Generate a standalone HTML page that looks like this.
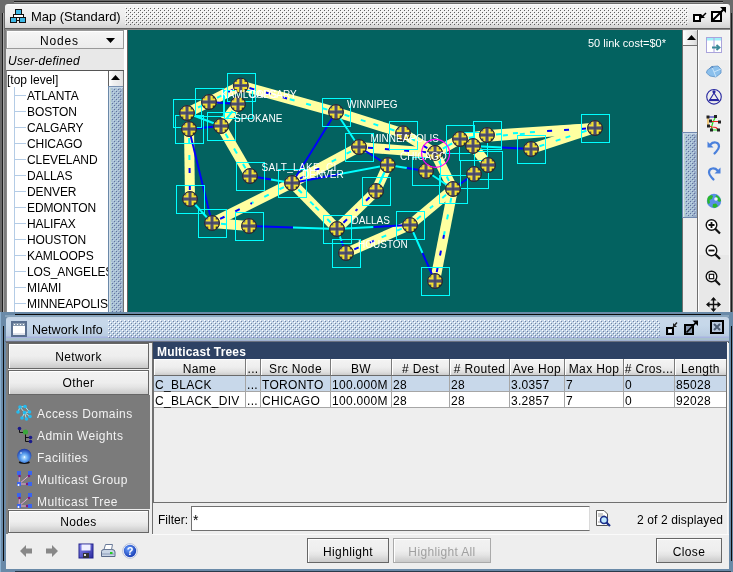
<!DOCTYPE html>
<html><head><meta charset="utf-8">
<style>
*{margin:0;padding:0;box-sizing:border-box}
html,body{width:733px;height:572px;overflow:hidden;background:#6b6b6b;font-family:"Liberation Sans",sans-serif;font-size:12px;color:#000}
.a{position:absolute}
.t{position:absolute;white-space:nowrap;line-height:16px;will-change:transform}
.m{letter-spacing:0.35px}
.btn{will-change:transform;position:absolute;border:1px solid #666;background:linear-gradient(#f2f2f2 0%,#eeeeee 50%,#e4e4e4 70%,#d2d2d2 90%,#cacaca 100%);text-align:center;box-shadow:inset 1px 1px 0 #fff;letter-spacing:0.35px}
.hd{will-change:transform;position:absolute;top:0;height:17px;border-right:1px solid #7a7a7a;border-bottom:1px solid #6a6a6a;background:linear-gradient(#f4f4f4,#eeeeee 50%,#e0e0e0 80%,#cccccc);text-align:center;line-height:20px;box-shadow:inset 1px 1px 0 #fff;letter-spacing:0.35px}
.cell{will-change:transform;position:absolute;height:16px;border-right:1px solid #a6a6a6;border-bottom:1px solid #a6a6a6;line-height:18px;padding-left:1px;white-space:nowrap;letter-spacing:0.3px}
</style></head><body>

<div class="a" style="left:14px;top:1px;width:709px;height:1px;background:#1e1e1e;"></div>
<div class="a" style="left:14px;top:2px;width:709px;height:1px;background:#9a9a9a;"></div>
<div class="a" style="left:2px;top:13px;width:1px;height:300px;background:#1e1e1e;"></div>
<div class="a" style="left:3px;top:13px;width:1px;height:300px;background:#a8a8a8;"></div>
<div class="a" style="left:731px;top:13px;width:1px;height:300px;background:#1e1e1e;"></div>
<div class="a" style="left:5px;top:4px;width:725px;height:25px;background:linear-gradient(#ffffff 0px,#f2f2f2 2px,#eeeeee 12px,#e6e6e6 17px,#dcdcdc 21px,#d4d4d4 24px);border-radius:3px 3px 0 0"></div>
<svg class="a" style="left:125px;top:7px" width="563" height="18" shape-rendering="crispEdges"><defs><pattern id="p1" x="0" y="0" width="4" height="4" patternUnits="userSpaceOnUse"><rect x="0" y="0" width="1" height="1" fill="#ffffff"/><rect x="2" y="2" width="1" height="1" fill="#ffffff"/><rect x="1" y="1" width="1" height="1" fill="#5e5e5e"/><rect x="3" y="3" width="1" height="1" fill="#5e5e5e"/></pattern></defs><rect width="563" height="18" fill="url(#p1)"/></svg>
<div class="a" style="left:5px;top:28px;width:725px;height:1px;background:#606060;"></div>
<div class="a" style="left:5px;top:29px;width:725px;height:1px;background:#8a8a8a;"></div>
<svg class="a" style="left:10px;top:9px" width="17" height="15" shape-rendering="crispEdges">
<rect x="5.5" y="0.5" width="6" height="5" fill="#3cb8e6" stroke="#111"/>
<rect x="3.5" y="5.5" width="10" height="3" fill="#fff" stroke="#111"/>
<rect x="0.5" y="8.5" width="6" height="5" fill="#3cb8e6" stroke="#111"/>
<rect x="9.5" y="8.5" width="6" height="5" fill="#3cb8e6" stroke="#111"/>
<rect x="6" y="11" width="4" height="1" fill="#111"/>
</svg>
<div class="t" style="left:31px;top:8px;font-size:13px;letter-spacing:-0.05px;line-height:17px">Map (Standard)</div>
<svg class="a" style="left:692px;top:6px" width="36" height="18" viewBox="0 0 36 18" shape-rendering="crispEdges">
<rect x="2" y="9" width="6" height="6" fill="#fff" stroke="#000" stroke-width="2"/>
<path d="M9 12L14 7" stroke="#000" stroke-width="1.4" fill="none" shape-rendering="auto"/>
<path d="M9 8V12H13Z" fill="#000" shape-rendering="auto"/>
<rect x="20" y="6" width="9" height="9" fill="#fff" stroke="#000" stroke-width="2"/>
<path d="M21 14L33 2" stroke="#000" stroke-width="2" fill="none" shape-rendering="auto"/>
<path d="M28 1H34V7Z" fill="#000" shape-rendering="auto"/>
</svg>
<div class="a" style="left:4px;top:30px;width:124px;height:283px;background:#eeeeee;"></div>
<div class="a" style="left:4px;top:30px;width:2px;height:283px;background:#7c7c7c;"></div>
<div class="a" style="left:6px;top:30px;width:118px;height:19px;border:1px solid #9a9a9a;background:linear-gradient(#f6f6f6,#ececec);box-shadow:inset 1px 1px 0 #fff"></div>
<div class="t" style="left:40px;top:33px;font-size:12px;letter-spacing:0.8px;line-height:17px">Nodes</div>
<svg class="a" style="left:106px;top:38px" width="10" height="6"><path d="M0 0H9L4.5 5Z" fill="#000"/></svg>
<div class="a" style="left:6px;top:49px;width:118px;height:21px;background:#e8e8e8;"></div>
<div class="t" style="left:8px;top:53px;font-style:italic;font-size:12px;letter-spacing:0.28px;line-height:16px">User-defined</div>
<div class="a" style="left:6px;top:70px;width:118px;height:243px;background:#ffffff;border-top:1px solid #555;border-left:1px solid #8a8a8a"></div>
<div class="a" style="left:14px;top:87px;width:1px;height:226px;background:#b4cce6;"></div>
<div class="t" style="left:7px;top:72px;font-size:12px;letter-spacing:0px;line-height:17px">[top level]</div>
<div class="a" style="left:14px;top:95px;width:12px;height:1px;background:#b4cce6;"></div>
<div class="t" style="left:27px;top:88px;font-size:12px;letter-spacing:-0.1px">ATLANTA</div>
<div class="a" style="left:14px;top:111px;width:12px;height:1px;background:#b4cce6;"></div>
<div class="t" style="left:27px;top:104px;font-size:12px;letter-spacing:-0.1px">BOSTON</div>
<div class="a" style="left:14px;top:127px;width:12px;height:1px;background:#b4cce6;"></div>
<div class="t" style="left:27px;top:120px;font-size:12px;letter-spacing:-0.1px">CALGARY</div>
<div class="a" style="left:14px;top:143px;width:12px;height:1px;background:#b4cce6;"></div>
<div class="t" style="left:27px;top:136px;font-size:12px;letter-spacing:-0.1px">CHICAGO</div>
<div class="a" style="left:14px;top:159px;width:12px;height:1px;background:#b4cce6;"></div>
<div class="t" style="left:27px;top:152px;font-size:12px;letter-spacing:-0.1px">CLEVELAND</div>
<div class="a" style="left:14px;top:175px;width:12px;height:1px;background:#b4cce6;"></div>
<div class="t" style="left:27px;top:168px;font-size:12px;letter-spacing:-0.1px">DALLAS</div>
<div class="a" style="left:14px;top:191px;width:12px;height:1px;background:#b4cce6;"></div>
<div class="t" style="left:27px;top:184px;font-size:12px;letter-spacing:-0.1px">DENVER</div>
<div class="a" style="left:14px;top:207px;width:12px;height:1px;background:#b4cce6;"></div>
<div class="t" style="left:27px;top:200px;font-size:12px;letter-spacing:-0.1px">EDMONTON</div>
<div class="a" style="left:14px;top:223px;width:12px;height:1px;background:#b4cce6;"></div>
<div class="t" style="left:27px;top:216px;font-size:12px;letter-spacing:-0.1px">HALIFAX</div>
<div class="a" style="left:14px;top:239px;width:12px;height:1px;background:#b4cce6;"></div>
<div class="t" style="left:27px;top:232px;font-size:12px;letter-spacing:-0.1px">HOUSTON</div>
<div class="a" style="left:14px;top:255px;width:12px;height:1px;background:#b4cce6;"></div>
<div class="t" style="left:27px;top:248px;font-size:12px;letter-spacing:-0.1px">KAMLOOPS</div>
<div class="a" style="left:14px;top:271px;width:12px;height:1px;background:#b4cce6;"></div>
<div class="t" style="left:27px;top:264px;font-size:12px;letter-spacing:-0.1px">LOS_ANGELES</div>
<div class="a" style="left:14px;top:287px;width:12px;height:1px;background:#b4cce6;"></div>
<div class="t" style="left:27px;top:280px;font-size:12px;letter-spacing:-0.1px">MIAMI</div>
<div class="a" style="left:14px;top:303px;width:12px;height:1px;background:#b4cce6;"></div>
<div class="t" style="left:27px;top:296px;font-size:12px;letter-spacing:-0.1px">MINNEAPOLIS</div>
<div class="a" style="left:108px;top:71px;width:1px;height:242px;background:#606060;"></div>
<div class="a" style="left:109px;top:71px;width:15px;height:15px;background:linear-gradient(90deg,#ffffff 0%,#f0f0f0 30%,#e6e6e6 80%,#d8d8d8 100%);"></div>
<svg class="a" style="left:111px;top:75px" width="10" height="6"><path d="M0 5H9L4.5 0Z" fill="#000"/></svg>
<div class="a" style="left:108px;top:86px;width:1px;height:227px;background:#6a88a8;"></div>
<div class="a" style="left:109px;top:86px;width:14px;height:227px;background:linear-gradient(90deg,#d4e0ea 0px,#d4e0ea 1px,#bcd2cc 1px,#bcd2cc 2px,#a8c0d4 2px,#a8c0d4 10px,#9cb0c8 10px);border-top:1px solid #7890b0"></div>
<div class="a" style="left:109px;top:87px;width:14px;height:1px;background:#c8d8e8;"></div>
<svg class="a" style="left:111px;top:88px" width="11" height="225" shape-rendering="crispEdges"><defs><pattern id="p2" x="2" y="0" width="4" height="4" patternUnits="userSpaceOnUse"><rect x="0" y="0" width="1" height="1" fill="#c4d6e6"/><rect x="2" y="2" width="1" height="1" fill="#c4d6e6"/><rect x="1" y="1" width="1" height="1" fill="#6070a0"/><rect x="3" y="3" width="1" height="1" fill="#6070a0"/></pattern></defs><rect width="11" height="225" fill="url(#p2)"/></svg>
<div class="a" style="left:123px;top:71px;width:1px;height:242px;background:#707070;"></div>
<div class="a" style="left:124px;top:30px;width:3px;height:283px;background:#ffffff;"></div>
<div class="a" style="left:127px;top:30px;width:1px;height:283px;background:#686060;"></div>
<div class="a" style="left:128px;top:30px;width:554px;height:282px;background:#036260;"></div>
<svg id="map" class="a" style="left:128px;top:30px;will-change:transform" width="554" height="282" viewBox="128 30 554 282"><defs>
<radialGradient id="ng" cx="0.35" cy="0.35" r="0.75"><stop offset="0" stop-color="#8a8a98"/><stop offset="0.6" stop-color="#4a4a58"/><stop offset="1" stop-color="#202028"/></radialGradient>
<g id="nd">
<circle r="7.7" fill="url(#ng)"/>
<path d="M-1.4 -6.5H-3.7V-3.5H-6.5V-1.4H-1.4Z M1.4 -6.5H3.7V-3.5H6.5V-1.4H1.4Z M-1.4 6.5H-3.7V3.5H-6.5V1.4H-1.4Z M1.4 6.5H3.7V3.5H6.5V1.4H1.4Z" fill="#f2e030"/>
<path d="M0 -7.4V7.4M-7.4 0H7.4" stroke="#5a5a7c" stroke-width="2.6"/>
<path d="M0 -7V7M-7 0H7" stroke="#3e3e58" stroke-width="0.8"/>
<circle r="7.4" fill="none" stroke="#26262e" stroke-width="1"/>
</g></defs>
<line x1="187" y1="113" x2="209" y2="102" stroke="#ffffa0" stroke-width="10"/>
<line x1="209" y1="102" x2="240.8" y2="85.6" stroke="#ffffa0" stroke-width="10"/>
<line x1="240.8" y1="85.6" x2="336" y2="112" stroke="#ffffa0" stroke-width="10"/>
<line x1="336" y1="112" x2="403" y2="133.3" stroke="#ffffa0" stroke-width="10"/>
<line x1="403" y1="133.3" x2="435" y2="152.9" stroke="#ffffa0" stroke-width="10"/>
<line x1="189" y1="129" x2="190" y2="199" stroke="#ffffa0" stroke-width="10"/>
<line x1="212" y1="223" x2="292" y2="183" stroke="#ffffa0" stroke-width="10"/>
<line x1="292" y1="183" x2="359" y2="147" stroke="#ffffa0" stroke-width="10"/>
<line x1="359" y1="147" x2="435" y2="152.9" stroke="#ffffa0" stroke-width="10"/>
<line x1="435" y1="152.9" x2="460" y2="139" stroke="#ffffa0" stroke-width="10"/>
<line x1="460" y1="139" x2="487" y2="135" stroke="#ffffa0" stroke-width="10"/>
<line x1="487" y1="135" x2="595" y2="128" stroke="#ffffa0" stroke-width="10"/>
<line x1="460" y1="139" x2="595" y2="128" stroke="#ffffa0" stroke-width="10"/>
<line x1="531" y1="149" x2="595" y2="128" stroke="#ffffa0" stroke-width="10"/>
<line x1="238" y1="104" x2="221" y2="126" stroke="#ffffa0" stroke-width="10"/>
<line x1="221" y1="126" x2="250" y2="176" stroke="#ffffa0" stroke-width="10"/>
<line x1="212" y1="223" x2="249" y2="226" stroke="#ffffa0" stroke-width="10"/>
<line x1="292" y1="183" x2="337" y2="229" stroke="#ffffa0" stroke-width="10"/>
<line x1="337" y1="229" x2="376" y2="191" stroke="#ffffa0" stroke-width="10"/>
<line x1="346" y1="253" x2="410" y2="225" stroke="#ffffa0" stroke-width="10"/>
<line x1="410" y1="225" x2="453" y2="189" stroke="#ffffa0" stroke-width="10"/>
<line x1="453" y1="189" x2="435" y2="281" stroke="#ffffa0" stroke-width="10"/>
<line x1="435" y1="152.9" x2="453" y2="189" stroke="#ffffa0" stroke-width="10"/>
<line x1="473" y1="146" x2="488" y2="165" stroke="#ffffa0" stroke-width="10"/>
<line x1="376" y1="191" x2="387.7" y2="165" stroke="#ffffa0" stroke-width="10"/>
<line x1="209" y1="102" x2="198.0" y2="107.5" stroke="#00ffff" stroke-width="2" stroke-dasharray="5 12" stroke-dashoffset="-9"/>
<line x1="209" y1="102" x2="224.9" y2="93.8" stroke="#00ffff" stroke-width="2" stroke-dasharray="5 12" stroke-dashoffset="-9"/>
<line x1="240.8" y1="85.6" x2="224.9" y2="93.8" stroke="#0000ff" stroke-width="2" stroke-dasharray="5 12" stroke-dashoffset="-9"/>
<line x1="240.8" y1="85.6" x2="288.4" y2="98.8" stroke="#0000ff" stroke-width="2" stroke-dasharray="5 12" stroke-dashoffset="-9"/>
<line x1="336" y1="112" x2="288.4" y2="98.8" stroke="#00ffff" stroke-width="2" stroke-dasharray="5 12" stroke-dashoffset="-9"/>
<line x1="336" y1="112" x2="369.5" y2="122.65" stroke="#00ffff" stroke-width="2" stroke-dasharray="5 12" stroke-dashoffset="-9"/>
<line x1="403" y1="133.3" x2="369.5" y2="122.65" stroke="#00ffff" stroke-width="2" stroke-dasharray="5 12" stroke-dashoffset="-9"/>
<line x1="403" y1="133.3" x2="419.0" y2="143.10000000000002" stroke="#00ffff" stroke-width="2" stroke-dasharray="5 12" stroke-dashoffset="-9"/>
<line x1="435" y1="152.9" x2="419.0" y2="143.10000000000002" stroke="#0000ff" stroke-width="2" stroke-dasharray="5 12" stroke-dashoffset="-9"/>
<line x1="189" y1="129" x2="189.5" y2="164.0" stroke="#00ffff" stroke-width="2" stroke-dasharray="5 12" stroke-dashoffset="-9"/>
<line x1="190" y1="199" x2="189.5" y2="164.0" stroke="#0000ff" stroke-width="2" stroke-dasharray="5 12" stroke-dashoffset="-9"/>
<line x1="212" y1="223" x2="252.0" y2="203.0" stroke="#0000ff" stroke-width="2" stroke-dasharray="5 12" stroke-dashoffset="-9"/>
<line x1="292" y1="183" x2="252.0" y2="203.0" stroke="#00ffff" stroke-width="2" stroke-dasharray="5 12" stroke-dashoffset="-9"/>
<line x1="292" y1="183" x2="325.5" y2="165.0" stroke="#0000ff" stroke-width="2" stroke-dasharray="5 12" stroke-dashoffset="-9"/>
<line x1="359" y1="147" x2="325.5" y2="165.0" stroke="#00ffff" stroke-width="2" stroke-dasharray="5 12" stroke-dashoffset="-9"/>
<line x1="359" y1="147" x2="397.0" y2="149.95" stroke="#0000ff" stroke-width="2" stroke-dasharray="5 12" stroke-dashoffset="-9"/>
<line x1="435" y1="152.9" x2="397.0" y2="149.95" stroke="#0000ff" stroke-width="2" stroke-dasharray="5 12" stroke-dashoffset="-9"/>
<line x1="435" y1="152.9" x2="447.5" y2="145.95" stroke="#00ffff" stroke-width="2" stroke-dasharray="5 12" stroke-dashoffset="-9"/>
<line x1="460" y1="139" x2="447.5" y2="145.95" stroke="#00ffff" stroke-width="2" stroke-dasharray="5 12" stroke-dashoffset="-9"/>
<line x1="460" y1="139" x2="473.5" y2="137.0" stroke="#00ffff" stroke-width="2" stroke-dasharray="5 12" stroke-dashoffset="-9"/>
<line x1="487" y1="135" x2="541.0" y2="131.5" stroke="#00ffff" stroke-width="2" stroke-dasharray="5 12" stroke-dashoffset="-9"/>
<line x1="595" y1="128" x2="541.0" y2="131.5" stroke="#0000ff" stroke-width="2" stroke-dasharray="5 12" stroke-dashoffset="-9"/>
<line x1="460" y1="139" x2="527.5" y2="133.5" stroke="#00ffff" stroke-width="2" stroke-dasharray="5 12" stroke-dashoffset="-9"/>
<line x1="531" y1="149" x2="563.0" y2="138.5" stroke="#00ffff" stroke-width="2" stroke-dasharray="5 12" stroke-dashoffset="-9"/>
<line x1="595" y1="128" x2="563.0" y2="138.5" stroke="#00ffff" stroke-width="2" stroke-dasharray="5 12" stroke-dashoffset="-9"/>
<line x1="238" y1="104" x2="229.5" y2="115.0" stroke="#00ffff" stroke-width="2" stroke-dasharray="5 12" stroke-dashoffset="-9"/>
<line x1="221" y1="126" x2="229.5" y2="115.0" stroke="#00ffff" stroke-width="2" stroke-dasharray="5 12" stroke-dashoffset="-9"/>
<line x1="221" y1="126" x2="235.5" y2="151.0" stroke="#00ffff" stroke-width="2" stroke-dasharray="5 12" stroke-dashoffset="-9"/>
<line x1="250" y1="176" x2="235.5" y2="151.0" stroke="#00ffff" stroke-width="2" stroke-dasharray="5 12" stroke-dashoffset="-9"/>
<line x1="212" y1="223" x2="230.5" y2="224.5" stroke="#00ffff" stroke-width="2" stroke-dasharray="5 12" stroke-dashoffset="-9"/>
<line x1="292" y1="183" x2="314.5" y2="206.0" stroke="#00ffff" stroke-width="2" stroke-dasharray="5 12" stroke-dashoffset="-9"/>
<line x1="337" y1="229" x2="314.5" y2="206.0" stroke="#00ffff" stroke-width="2" stroke-dasharray="5 12" stroke-dashoffset="-9"/>
<line x1="337" y1="229" x2="356.5" y2="210.0" stroke="#0000ff" stroke-width="2" stroke-dasharray="5 12" stroke-dashoffset="-9"/>
<line x1="376" y1="191" x2="356.5" y2="210.0" stroke="#0000ff" stroke-width="2" stroke-dasharray="5 12" stroke-dashoffset="-9"/>
<line x1="346" y1="253" x2="378.0" y2="239.0" stroke="#0000ff" stroke-width="2" stroke-dasharray="5 12" stroke-dashoffset="-9"/>
<line x1="410" y1="225" x2="378.0" y2="239.0" stroke="#00ffff" stroke-width="2" stroke-dasharray="5 12" stroke-dashoffset="-9"/>
<line x1="410" y1="225" x2="431.5" y2="207.0" stroke="#00ffff" stroke-width="2" stroke-dasharray="5 12" stroke-dashoffset="-9"/>
<line x1="453" y1="189" x2="431.5" y2="207.0" stroke="#00ffff" stroke-width="2" stroke-dasharray="5 12" stroke-dashoffset="-9"/>
<line x1="453" y1="189" x2="444.0" y2="235.0" stroke="#00ffff" stroke-width="2" stroke-dasharray="5 12" stroke-dashoffset="-9"/>
<line x1="435" y1="281" x2="444.0" y2="235.0" stroke="#0000ff" stroke-width="2" stroke-dasharray="5 12" stroke-dashoffset="-9"/>
<line x1="435" y1="152.9" x2="444.0" y2="170.95" stroke="#00ffff" stroke-width="2" stroke-dasharray="5 12" stroke-dashoffset="-9"/>
<line x1="453" y1="189" x2="444.0" y2="170.95" stroke="#00ffff" stroke-width="2" stroke-dasharray="5 12" stroke-dashoffset="-9"/>
<line x1="376" y1="191" x2="381.85" y2="178.0" stroke="#00ffff" stroke-width="2" stroke-dasharray="5 12" stroke-dashoffset="-9"/>
<line x1="387.7" y1="165" x2="381.85" y2="178.0" stroke="#00ffff" stroke-width="2" stroke-dasharray="5 12" stroke-dashoffset="-9"/>
<line x1="336" y1="112" x2="314.0" y2="147.5" stroke="#0000ff" stroke-width="1.9"/>
<line x1="314.0" y1="147.5" x2="292" y2="183" stroke="#0000ff" stroke-width="1.9"/>
<line x1="453" y1="189" x2="463.5" y2="181.5" stroke="#0000ff" stroke-width="1.9"/>
<line x1="463.5" y1="181.5" x2="474" y2="174" stroke="#0000ff" stroke-width="1.9"/>
<line x1="250" y1="176" x2="271.0" y2="179.5" stroke="#0000ff" stroke-width="1.9"/>
<line x1="271.0" y1="179.5" x2="292" y2="183" stroke="#00ffff" stroke-width="1.9"/>
<line x1="249" y1="226" x2="293.0" y2="227.5" stroke="#0000ff" stroke-width="1.9"/>
<line x1="293.0" y1="227.5" x2="337" y2="229" stroke="#00ffff" stroke-width="1.9"/>
<line x1="337" y1="229" x2="373.5" y2="227.0" stroke="#00ffff" stroke-width="1.9"/>
<line x1="373.5" y1="227.0" x2="410" y2="225" stroke="#0000ff" stroke-width="1.9"/>
<line x1="189" y1="129" x2="200.5" y2="176.0" stroke="#0000ff" stroke-width="1.9"/>
<line x1="200.5" y1="176.0" x2="212" y2="223" stroke="#0000ff" stroke-width="1.9"/>
<line x1="209" y1="102" x2="223.5" y2="103.0" stroke="#0000ff" stroke-width="1.9"/>
<line x1="223.5" y1="103.0" x2="238" y2="104" stroke="#0000ff" stroke-width="1.9"/>
<line x1="189" y1="129" x2="205.0" y2="127.5" stroke="#0000ff" stroke-width="1.9"/>
<line x1="205.0" y1="127.5" x2="221" y2="126" stroke="#0000ff" stroke-width="1.9"/>
<line x1="473" y1="146" x2="502.0" y2="147.5" stroke="#00ffff" stroke-width="1.9"/>
<line x1="502.0" y1="147.5" x2="531" y2="149" stroke="#0000ff" stroke-width="1.9"/>
<line x1="359" y1="147" x2="373.35" y2="156.0" stroke="#0000ff" stroke-width="1.9"/>
<line x1="373.35" y1="156.0" x2="387.7" y2="165" stroke="#0000ff" stroke-width="1.9"/>
<line x1="336" y1="112" x2="347.5" y2="129.5" stroke="#00ffff" stroke-width="1.9"/>
<line x1="347.5" y1="129.5" x2="359" y2="147" stroke="#00ffff" stroke-width="1.9"/>
<line x1="292" y1="183" x2="339.85" y2="174.0" stroke="#0000ff" stroke-width="1.9"/>
<line x1="339.85" y1="174.0" x2="387.7" y2="165" stroke="#00ffff" stroke-width="1.9"/>
<line x1="387.7" y1="165" x2="406.85" y2="168.0" stroke="#00ffff" stroke-width="1.9"/>
<line x1="406.85" y1="168.0" x2="426" y2="171" stroke="#0000ff" stroke-width="1.9"/>
<line x1="426" y1="171" x2="439.5" y2="180.0" stroke="#00ffff" stroke-width="1.9"/>
<line x1="439.5" y1="180.0" x2="453" y2="189" stroke="#00ffff" stroke-width="1.9"/>
<line x1="337" y1="229" x2="341.5" y2="241.0" stroke="#00ffff" stroke-width="1.9"/>
<line x1="341.5" y1="241.0" x2="346" y2="253" stroke="#0000ff" stroke-width="1.9"/>
<line x1="410" y1="225" x2="422.5" y2="253.0" stroke="#00ffff" stroke-width="1.9"/>
<line x1="422.5" y1="253.0" x2="435" y2="281" stroke="#0000ff" stroke-width="1.9"/>
<line x1="190" y1="199" x2="201.0" y2="211.0" stroke="#00ffff" stroke-width="1.9"/>
<line x1="201.0" y1="211.0" x2="212" y2="223" stroke="#00ffff" stroke-width="1.9"/>
<line x1="187" y1="113" x2="204.0" y2="119.5" stroke="#00ffff" stroke-width="1.9"/>
<line x1="204.0" y1="119.5" x2="221" y2="126" stroke="#00ffff" stroke-width="1.9"/>
<line x1="387.7" y1="165" x2="381.85" y2="178.0" stroke="#00ffff" stroke-width="1.9"/>
<line x1="381.85" y1="178.0" x2="376" y2="191" stroke="#00ffff" stroke-width="1.9"/>
<rect x="227.5" y="73.5" width="28" height="28" fill="none" stroke="#00ffff" stroke-width="1" shape-rendering="crispEdges"/>
<rect x="195.5" y="88.5" width="28" height="28" fill="none" stroke="#00ffff" stroke-width="1" shape-rendering="crispEdges"/>
<rect x="224.5" y="90.5" width="28" height="28" fill="none" stroke="#00ffff" stroke-width="1" shape-rendering="crispEdges"/>
<rect x="173.5" y="99.5" width="28" height="28" fill="none" stroke="#00ffff" stroke-width="1" shape-rendering="crispEdges"/>
<rect x="175.5" y="115.5" width="28" height="28" fill="none" stroke="#00ffff" stroke-width="1" shape-rendering="crispEdges"/>
<rect x="207.5" y="112.5" width="28" height="28" fill="none" stroke="#00ffff" stroke-width="1" shape-rendering="crispEdges"/>
<rect x="236.5" y="162.5" width="28" height="28" fill="none" stroke="#00ffff" stroke-width="1" shape-rendering="crispEdges"/>
<rect x="176.5" y="185.5" width="28" height="28" fill="none" stroke="#00ffff" stroke-width="1" shape-rendering="crispEdges"/>
<rect x="198.5" y="209.5" width="28" height="28" fill="none" stroke="#00ffff" stroke-width="1" shape-rendering="crispEdges"/>
<rect x="235.5" y="212.5" width="28" height="28" fill="none" stroke="#00ffff" stroke-width="1" shape-rendering="crispEdges"/>
<rect x="278.5" y="169.5" width="28" height="28" fill="none" stroke="#00ffff" stroke-width="1" shape-rendering="crispEdges"/>
<rect x="322.5" y="98.5" width="28" height="28" fill="none" stroke="#00ffff" stroke-width="1" shape-rendering="crispEdges"/>
<rect x="345.5" y="133.5" width="28" height="28" fill="none" stroke="#00ffff" stroke-width="1" shape-rendering="crispEdges"/>
<rect x="389.5" y="121.5" width="28" height="28" fill="none" stroke="#00ffff" stroke-width="1" shape-rendering="crispEdges"/>
<rect x="362.5" y="177.5" width="28" height="28" fill="none" stroke="#00ffff" stroke-width="1" shape-rendering="crispEdges"/>
<rect x="412.5" y="157.5" width="28" height="28" fill="none" stroke="#00ffff" stroke-width="1" shape-rendering="crispEdges"/>
<rect x="323.5" y="215.5" width="28" height="28" fill="none" stroke="#00ffff" stroke-width="1" shape-rendering="crispEdges"/>
<rect x="332.5" y="239.5" width="28" height="28" fill="none" stroke="#00ffff" stroke-width="1" shape-rendering="crispEdges"/>
<rect x="396.5" y="211.5" width="28" height="28" fill="none" stroke="#00ffff" stroke-width="1" shape-rendering="crispEdges"/>
<rect x="421.5" y="267.5" width="28" height="28" fill="none" stroke="#00ffff" stroke-width="1" shape-rendering="crispEdges"/>
<rect x="446.5" y="125.5" width="28" height="28" fill="none" stroke="#00ffff" stroke-width="1" shape-rendering="crispEdges"/>
<rect x="473.5" y="121.5" width="28" height="28" fill="none" stroke="#00ffff" stroke-width="1" shape-rendering="crispEdges"/>
<rect x="459.5" y="132.5" width="28" height="28" fill="none" stroke="#00ffff" stroke-width="1" shape-rendering="crispEdges"/>
<rect x="474.5" y="151.5" width="28" height="28" fill="none" stroke="#00ffff" stroke-width="1" shape-rendering="crispEdges"/>
<rect x="460.5" y="160.5" width="28" height="28" fill="none" stroke="#00ffff" stroke-width="1" shape-rendering="crispEdges"/>
<rect x="439.5" y="175.5" width="28" height="28" fill="none" stroke="#00ffff" stroke-width="1" shape-rendering="crispEdges"/>
<rect x="517.5" y="135.5" width="28" height="28" fill="none" stroke="#00ffff" stroke-width="1" shape-rendering="crispEdges"/>
<rect x="581.5" y="114.5" width="28" height="28" fill="none" stroke="#00ffff" stroke-width="1" shape-rendering="crispEdges"/>
<use href="#nd" x="240.8" y="85.6"/>
<use href="#nd" x="209" y="102"/>
<use href="#nd" x="238" y="104"/>
<use href="#nd" x="187" y="113"/>
<use href="#nd" x="189" y="129"/>
<use href="#nd" x="221" y="126"/>
<use href="#nd" x="250" y="176"/>
<use href="#nd" x="190" y="199"/>
<use href="#nd" x="212" y="223"/>
<use href="#nd" x="249" y="226"/>
<use href="#nd" x="292" y="183"/>
<use href="#nd" x="336" y="112"/>
<use href="#nd" x="359" y="147"/>
<use href="#nd" x="403" y="133.3"/>
<use href="#nd" x="376" y="191"/>
<use href="#nd" x="426" y="171"/>
<use href="#nd" x="337" y="229"/>
<use href="#nd" x="346" y="253"/>
<use href="#nd" x="410" y="225"/>
<use href="#nd" x="435" y="281"/>
<use href="#nd" x="460" y="139"/>
<use href="#nd" x="487" y="135"/>
<use href="#nd" x="473" y="146"/>
<use href="#nd" x="488" y="165"/>
<use href="#nd" x="474" y="174"/>
<use href="#nd" x="453" y="189"/>
<use href="#nd" x="531" y="149"/>
<use href="#nd" x="595" y="128"/>
<use href="#nd" x="387.7" y="165"/>
<use href="#nd" x="435" y="152.9"/>
<text x="221" y="98" fill="#fff" font-family="Liberation Sans" font-size="10">KAMLOOPS</text>
<text x="249" y="98" fill="#fff" font-family="Liberation Sans" font-size="10">CALGARY</text>
<text x="234" y="121.5" fill="#fff" font-family="Liberation Sans" font-size="10">SPOKANE</text>
<text x="347" y="107.5" fill="#fff" font-family="Liberation Sans" font-size="10">WINNIPEG</text>
<text x="261.5" y="171" fill="#fff" font-family="Liberation Sans" font-size="10" letter-spacing="0.35">SALT_LAKE_CI</text>
<text x="302" y="178" fill="#fff" font-family="Liberation Sans" font-size="10">DENVER</text>
<text x="370.5" y="142" fill="#fff" font-family="Liberation Sans" font-size="10">MINNEAPOLIS</text>
<text x="400" y="160" fill="#fff" font-family="Liberation Sans" font-size="10">CHICAGO</text>
<text x="351.5" y="224" fill="#fff" font-family="Liberation Sans" font-size="10">DALLAS</text>
<text x="358" y="248" fill="#fff" font-family="Liberation Sans" font-size="10">HOUSTON</text>
<circle cx="435.6" cy="153.3" r="14" fill="none" stroke="#ff00ff" stroke-width="1.2"/></svg>
<div class="t" style="left:588px;top:36px;color:#fff;font-size:11px;letter-spacing:0px;line-height:14px">50 link cost=$0*</div>
<div class="a" style="left:682px;top:30px;width:1px;height:283px;background:#707070;"></div>
<div class="a" style="left:683px;top:30px;width:15px;height:283px;background:#eeeeee;"></div>
<div class="a" style="left:683px;top:31px;width:14px;height:15px;background:linear-gradient(90deg,#ffffff 0%,#f2f2f2 30%,#e6e6e6 75%,#d6d6d6 100%);"></div>
<div class="a" style="left:683px;top:45px;width:14px;height:1px;background:#707070;"></div>
<svg class="a" style="left:687px;top:35px" width="10" height="6"><path d="M0 5H9L4.5 0Z" fill="#000"/></svg>
<div class="a" style="left:682px;top:132px;width:16px;height:86px;background:linear-gradient(90deg,#7088b0 0px,#7088b0 1px,#d8e4f0 1px,#d8e4f0 2px,#bcd2cc 2px,#bcd2cc 3px,#a8c0d4 3px,#a8c0d4 11px,#98acc8 11px,#98acc8 15px,#6a80a8 15px);border-top:1px solid #7088b0;border-bottom:1px solid #7088b0"></div>
<div class="a" style="left:683px;top:133px;width:14px;height:1px;background:#c8d8e8;"></div>
<svg class="a" style="left:685px;top:134px" width="11" height="82" shape-rendering="crispEdges"><defs><pattern id="p3" x="0" y="2" width="4" height="4" patternUnits="userSpaceOnUse"><rect x="0" y="0" width="1" height="1" fill="#c4d6e6"/><rect x="2" y="2" width="1" height="1" fill="#c4d6e6"/><rect x="1" y="1" width="1" height="1" fill="#6070a0"/><rect x="3" y="3" width="1" height="1" fill="#6070a0"/></pattern></defs><rect width="11" height="82" fill="url(#p3)"/></svg>
<div class="a" style="left:697px;top:30px;width:1px;height:283px;background:#707070;"></div>
<div class="a" style="left:698px;top:30px;width:32px;height:283px;background:#f2f2f2;"></div>
<svg id="tb" class="a" style="left:698px;top:29px" width="32" height="284"><g transform="translate(-698,-29)">
<rect x="698" y="60" width="32" height="195" fill="#eeeeee"/>
<rect x="698" y="255" width="32" height="58" fill="#e8e8e8"/>
<rect x="706.5" y="37.5" width="15" height="15" fill="#fff" stroke="#aaa4dc"/>
<rect x="707" y="38" width="14" height="2.5" fill="#9ef0fa"/>
<path d="M714 38V52" stroke="#b8b0e4" stroke-width="1.2"/>
<path d="M712 47.5H719M716.5 45L719.5 47.5L716.5 50" stroke="#3c8a9a" stroke-width="1.8" fill="none"/>
<path d="M707 70.5L712 66.5L718 66L721 69V73L716 77L710 76L706.5 73Z" fill="#8cc0ec" stroke="#5a90c8" stroke-width="0.8"/>
<path d="M712 67L714 72L716 77M714 72L721 69" stroke="#c8e4fa" stroke-width="1" fill="none"/>
<path d="M710 68.5L712 66.5L713 68" stroke="#3a6aa8" stroke-width="0.8" fill="none"/>
<circle cx="714" cy="96.8" r="7.3" fill="none" stroke="#2828a0" stroke-width="1.1"/>
<circle cx="714" cy="91.8" r="1.6" fill="#2828a0"/>
<path d="M714 93L710 99.5H718Z" fill="none" stroke="#2828a0" stroke-width="1.1"/>
<rect x="709" y="99.5" width="10" height="1.6" fill="#2828a0"/>
<path d="M708 117H715.5" stroke="#3838c0" stroke-width="1.2"/>
<path d="M708 117V126" stroke="#f0b030" stroke-width="1.2"/>
<path d="M715.5 117L713 122L711.5 127L712 130H718.5" stroke="#22dd22" stroke-width="1.2" fill="none"/>
<path d="M712 121.5H719.5M709 126L712 127L716 127.5L718.5 130" stroke="#ee2222" stroke-width="1.1" fill="none"/>
<rect x="706.5" y="115.5" width="3" height="3" fill="#222"/>
<rect x="714.0" y="115.0" width="3" height="3" fill="#222"/>
<rect x="709.0" y="119.5" width="3" height="3" fill="#222"/>
<rect x="718.0" y="120.5" width="3" height="3" fill="#222"/>
<rect x="707.0" y="124.5" width="3" height="3" fill="#222"/>
<rect x="710.0" y="128.5" width="3" height="3" fill="#222"/>
<rect x="717.0" y="128.5" width="3" height="3" fill="#222"/>
<path d="M710.5 144.5C713 141.5 719 141.5 719 146.5C719 149.5 716.5 151 714.5 153.5" stroke="#4a80dc" stroke-width="2.2" fill="none" stroke-linecap="round"/>
<path d="M707.5 141.5V147.5H713.5Z" fill="#4a80dc"/>
<path d="M717.5 170.5C715 167.5 709 167.5 709 172.5C709 175.5 711.5 177 713.5 179.5" stroke="#4a80dc" stroke-width="2.2" fill="none" stroke-linecap="round"/>
<path d="M720.5 167.5V173.5H714.5Z" fill="#4a80dc"/>
<circle cx="714" cy="201" r="7.2" fill="#5a8ee8"/>
<path d="M708 197C710 195 712 195 713 196L712 199L709.5 200L710 203L708 204C707 202 707 199 708 197Z" fill="#2ab82a"/>
<path d="M716 195C719 196 721 199 721 201L719 202L717 200L715.5 197Z" fill="#2ab82a"/>
<path d="M713 204L716 203.5L718 206L715 208L712.5 207Z" fill="#2ab82a"/>
<circle cx="716" cy="199" r="1.8" fill="#e8f0ff"/>
<circle cx="711.5" cy="225" r="5.3" fill="#fff" stroke="#111" stroke-width="1.4"/>
<path d="M715 228.5L720 233.5" stroke="#111" stroke-width="2.2"/>
<path d="M708.5 225H714.5M711.5 222V228" stroke="#111" stroke-width="1.8"/>
<circle cx="711.5" cy="250.5" r="5.3" fill="#fff" stroke="#111" stroke-width="1.4"/>
<path d="M715 254L720 259" stroke="#111" stroke-width="2.2"/>
<path d="M708.5 250.5H714.5" stroke="#111" stroke-width="1.8"/>
<circle cx="711.5" cy="276.5" r="5.3" fill="#fff" stroke="#111" stroke-width="1.4"/>
<path d="M715 280L720 285" stroke="#111" stroke-width="2.2"/>
<rect x="709.3" y="274.3" width="4.4" height="4.4" fill="none" stroke="#111" stroke-width="1.2"/>
<path d="M713.5 298V311M707 304.5H720" stroke="#111" stroke-width="1.4"/>
<path d="M713.5 297L710.5 300.5H716.5ZM713.5 312L710.5 308.5H716.5ZM706 304.5L709.5 301.5V307.5ZM721 304.5L717.5 301.5V307.5Z" fill="#111"/>
</g></svg>
<div class="a" style="left:698px;top:30px;width:1px;height:283px;background:#ffffff;"></div>
<div class="a" style="left:729px;top:30px;width:1px;height:283px;background:#fafafa;"></div>
<div class="a" style="left:0px;top:312px;width:733px;height:260px;background:#6a8aa8;"></div>
<div class="a" style="left:0px;top:312px;width:1px;height:260px;background:#8ab0d0;"></div>
<div class="a" style="left:15px;top:314px;width:706px;height:1px;background:#0a0a0a;"></div>
<div class="a" style="left:3px;top:326px;width:1px;height:235px;background:#0a0a0a;"></div>
<div class="a" style="left:731px;top:326px;width:1px;height:235px;background:#0a0a0a;"></div>
<div class="a" style="left:15px;top:571px;width:716px;height:1px;background:#2a3a4a;"></div>
<div class="a" style="left:5px;top:315px;width:724px;height:2px;background:#88a4bc;"></div>
<div class="a" style="left:6px;top:317px;width:723px;height:24px;background:linear-gradient(#c4d4e4 0px,#c8d8ea 3px,#c6d8ea 8px,#c0d2e6 14px,#b8cce0 19px,#a8b4e0 20px,#a8b4e0 21px,#a8c0cc 21px,#a8c0cc 23px,#a0b0d0 23px);border-radius:3px 3px 0 0"></div>
<div class="a" style="left:5px;top:341px;width:724px;height:1px;background:#6a7080;"></div>
<svg class="a" style="left:108px;top:320px" width="552" height="18" shape-rendering="crispEdges"><defs><pattern id="p4" x="0" y="0" width="4" height="4" patternUnits="userSpaceOnUse"><rect x="0" y="0" width="1" height="1" fill="#ffffff"/><rect x="2" y="2" width="1" height="1" fill="#ffffff"/><rect x="1" y="1" width="1" height="1" fill="#7080a0"/><rect x="3" y="3" width="1" height="1" fill="#7080a0"/></pattern></defs><rect width="552" height="18" fill="url(#p4)"/></svg>
<svg class="a" style="left:11px;top:321px" width="16" height="16" shape-rendering="crispEdges">
<rect x="1" y="1" width="14" height="14" fill="#fff" stroke="#5a7090" stroke-width="2"/>
<rect x="2" y="2" width="12" height="3" fill="#8a9cb0"/>
<path d="M3 3.5H4M6 3.5H7M9 3.5H10M12 3.5H13" stroke="#fff"/>
<rect x="2" y="12" width="12" height="2" fill="#e0e4ec"/>
</svg>
<div class="t" style="left:32px;top:321px;font-size:12.5px;letter-spacing:0.05px;line-height:18px">Network Info</div>
<svg class="a" style="left:664px;top:318px" width="64" height="22" viewBox="0 0 64 22" shape-rendering="crispEdges">
<rect x="3" y="9.5" width="6" height="6" fill="#c8d4e4" stroke="#000" stroke-width="2"/>
<rect x="5" y="11.5" width="2" height="2" fill="#fff"/>
<path d="M9 9L13 4.5" stroke="#222" stroke-width="1.4" shape-rendering="auto"/>
<path d="M9 5V9H13Z" fill="#222" shape-rendering="auto"/>
<rect x="21" y="7" width="8" height="9" fill="#8898b0" stroke="#000" stroke-width="2"/>
<path d="M22.5 14.5L33 3.5" stroke="#000" stroke-width="1.8" shape-rendering="auto"/>
<path d="M28.5 2.5H34V8Z" fill="#000" shape-rendering="auto"/>
<rect x="47" y="3" width="12" height="12" fill="#b8c8dc" stroke="#000" stroke-width="2"/>
<path d="M50 6L56 12M56 6L50 12" stroke="#4a5a70" stroke-width="2" shape-rendering="auto"/>
</svg>
<div class="a" style="left:6px;top:342px;width:723px;height:227px;background:#eeeeee;"></div>
<div class="a" style="left:6px;top:342px;width:723px;height:1px;background:#606060;"></div>
<div class="btn" style="left:8px;top:343px;width:141px;height:26px;line-height:26px">Network</div>
<div class="btn" style="left:8px;top:370px;width:141px;height:25px;line-height:25px">Other</div>
<div class="a" style="left:7px;top:395px;width:143px;height:114px;background:#7b7b7b;"></div>
<div class="a" style="left:6px;top:343px;width:2px;height:191px;background:#808080;"></div>
<div class="t" style="left:37px;top:406px;color:#f2f2f2;font-size:12px;letter-spacing:0.45px">Access Domains</div>
<div class="t" style="left:37px;top:428px;color:#f2f2f2;font-size:12px;letter-spacing:0.45px">Admin Weights</div>
<div class="t" style="left:37px;top:450px;color:#f2f2f2;font-size:12px;letter-spacing:0.45px">Facilities</div>
<div class="t" style="left:37px;top:472px;color:#f2f2f2;font-size:12px;letter-spacing:0.45px">Multicast Group</div>
<div class="t" style="left:37px;top:494px;color:#f2f2f2;font-size:12px;letter-spacing:0.45px">Multicast Tree</div>
<svg class="a" style="left:8px;top:395px" width="142" height="114"><g transform="translate(-8,-395)">
<line x1="20" y1="407" x2="25" y2="406.5" stroke="#9ee8f8" stroke-width="1"/>
<line x1="20" y1="407" x2="18" y2="412" stroke="#9ee8f8" stroke-width="1"/>
<line x1="20" y1="407" x2="24.5" y2="412.5" stroke="#9ee8f8" stroke-width="1"/>
<line x1="25" y1="406.5" x2="29.5" y2="412" stroke="#9ee8f8" stroke-width="1"/>
<line x1="24.5" y1="412.5" x2="29.5" y2="412" stroke="#9ee8f8" stroke-width="1"/>
<line x1="24.5" y1="412.5" x2="22" y2="418" stroke="#9ee8f8" stroke-width="1"/>
<line x1="24.5" y1="412.5" x2="26.5" y2="419" stroke="#9ee8f8" stroke-width="1"/>
<line x1="24.5" y1="412.5" x2="30" y2="416.5" stroke="#9ee8f8" stroke-width="1"/>
<circle cx="20" cy="407" r="1.8" fill="#22bbf0"/>
<circle cx="25" cy="406.5" r="1.8" fill="#22bbf0"/>
<circle cx="18" cy="412" r="1.8" fill="#22bbf0"/>
<circle cx="24.5" cy="412.5" r="1.8" fill="#22bbf0"/>
<circle cx="29.5" cy="412" r="1.8" fill="#22bbf0"/>
<circle cx="22" cy="418" r="1.8" fill="#22bbf0"/>
<circle cx="26.5" cy="419" r="1.8" fill="#22bbf0"/>
<circle cx="30" cy="416.5" r="1.8" fill="#22bbf0"/>
<path d="M19.5 429.5V432.5H24.5M25.5 433V441.5H30M25.5 437.5H30" stroke="#111" stroke-width="1" fill="none"/>
<circle cx="19.5" cy="428.5" r="1.8" fill="#1a1a8a"/>
<circle cx="25.5" cy="432" r="2.6" fill="#3aa83a"/>
<circle cx="30.5" cy="437.5" r="1.8" fill="#1a1a8a"/>
<circle cx="30.5" cy="441.5" r="1.8" fill="#1a1a8a"/>
<defs><radialGradient id="gl" cx="0.5" cy="0.62" r="0.6"><stop offset="0" stop-color="#c8ecff"/><stop offset="0.45" stop-color="#5aa0f0"/><stop offset="1" stop-color="#1a38a8"/></radialGradient></defs>
<ellipse cx="24.3" cy="462.5" rx="5.5" ry="1.4" fill="#111"/>
<circle cx="24.3" cy="455.8" r="7.1" fill="url(#gl)"/>
<circle cx="21" cy="453" r="0.8" fill="#fff"/><circle cx="24.5" cy="457" r="0.7" fill="#fff"/>
<path d="M19 484L19.5 475.5M19 484L29 475.5M19 484L27.5 484" stroke="#e0a8d8" stroke-width="1" fill="none"/>
<rect x="17" y="471" width="4" height="4" fill="#3a64f0"/>
<rect x="28" y="471" width="4" height="4" fill="#3a64f0"/>
<rect x="28" y="482" width="4" height="4" fill="#3a64f0"/>
<rect x="17" y="482" width="4" height="4" fill="#3a64f0"/>
<circle cx="19.5" cy="476" r="1.3" fill="#801880"/><circle cx="29" cy="476" r="1.3" fill="#801880"/><circle cx="27" cy="484" r="1.2" fill="#801880"/><circle cx="18.5" cy="485" r="1" fill="#fff"/>
<path d="M19 506L19.5 497.5M19 506L29 497.5M19 506L27.5 506" stroke="#e0a8d8" stroke-width="1" fill="none"/>
<rect x="17" y="493" width="4" height="4" fill="#3a64f0"/>
<rect x="28" y="493" width="4" height="4" fill="#3a64f0"/>
<rect x="28" y="504" width="4" height="4" fill="#3a64f0"/>
<rect x="17" y="504" width="4" height="4" fill="#3a64f0"/>
<circle cx="19.5" cy="498" r="1.3" fill="#801880"/><circle cx="29" cy="498" r="1.3" fill="#801880"/><circle cx="27" cy="506" r="1.2" fill="#801880"/><circle cx="18.5" cy="507" r="1" fill="#fff"/>
</g></svg>
<div class="btn" style="left:8px;top:510px;width:141px;height:23px;line-height:23px">Nodes</div>
<div class="a" style="left:152px;top:343px;width:1px;height:192px;background:#707070;"></div>
<div class="a" style="left:153px;top:342px;width:575px;height:17px;background:#2e4264;"></div>
<div class="t" style="left:157px;top:343px;color:#fff;font-weight:bold;font-size:12px;letter-spacing:0.15px;line-height:19px">Multicast Trees</div>
<div class="a" style="left:153px;top:359px;width:574px;height:143px;background:#eeeeee;border-left:1px solid #707070"></div>
<div class="a" style="left:0;top:0">
<div class="hd" style="left:154px;top:359px;width:92px">Name</div>
<div class="hd" style="left:246px;top:359px;width:15px">...</div>
<div class="hd" style="left:261px;top:359px;width:70px">Src Node</div>
<div class="hd" style="left:331px;top:359px;width:61px">BW</div>
<div class="hd" style="left:392px;top:359px;width:58px"># Dest</div>
<div class="hd" style="left:450px;top:359px;width:60px"># Routed</div>
<div class="hd" style="left:510px;top:359px;width:55px">Ave Hop</div>
<div class="hd" style="left:565px;top:359px;width:59px">Max Hop</div>
<div class="hd" style="left:624px;top:359px;width:51px"># Cros...</div>
<div class="hd" style="left:675px;top:359px;width:52px">Length</div>
<div class="cell" style="left:154px;top:376px;width:92px;background:#c8d8ea">C_BLACK</div>
<div class="cell" style="left:246px;top:376px;width:15px;background:#c8d8ea">...</div>
<div class="cell" style="left:261px;top:376px;width:70px;background:#c8d8ea">TORONTO</div>
<div class="cell" style="left:331px;top:376px;width:61px;background:#c8d8ea">100.000M</div>
<div class="cell" style="left:392px;top:376px;width:58px;background:#c8d8ea">28</div>
<div class="cell" style="left:450px;top:376px;width:60px;background:#c8d8ea">28</div>
<div class="cell" style="left:510px;top:376px;width:55px;background:#c8d8ea">3.0357</div>
<div class="cell" style="left:565px;top:376px;width:59px;background:#c8d8ea">7</div>
<div class="cell" style="left:624px;top:376px;width:51px;background:#c8d8ea">0</div>
<div class="cell" style="left:675px;top:376px;width:52px;background:#c8d8ea">85028</div>
<div class="cell" style="left:154px;top:392px;width:92px;background:#ffffff">C_BLACK_DIV</div>
<div class="cell" style="left:246px;top:392px;width:15px;background:#ffffff">...</div>
<div class="cell" style="left:261px;top:392px;width:70px;background:#ffffff">CHICAGO</div>
<div class="cell" style="left:331px;top:392px;width:61px;background:#ffffff">100.000M</div>
<div class="cell" style="left:392px;top:392px;width:58px;background:#ffffff">28</div>
<div class="cell" style="left:450px;top:392px;width:60px;background:#ffffff">28</div>
<div class="cell" style="left:510px;top:392px;width:55px;background:#ffffff">3.2857</div>
<div class="cell" style="left:565px;top:392px;width:59px;background:#ffffff">7</div>
<div class="cell" style="left:624px;top:392px;width:51px;background:#ffffff">0</div>
<div class="cell" style="left:675px;top:392px;width:52px;background:#ffffff">92028</div>
</div>
<div class="a" style="left:153px;top:359px;width:1px;height:143px;background:#707070;"></div>
<div class="a" style="left:727px;top:342px;width:1px;height:193px;background:#f8f8f8;"></div>
<div class="a" style="left:726px;top:359px;width:1px;height:143px;background:#707070;"></div>
<div class="a" style="left:153px;top:502px;width:574px;height:1px;background:#707070;"></div>
<div class="a" style="left:152px;top:534px;width:577px;height:1px;background:#fafafa;"></div>
<div class="t" style="left:158px;top:512px;letter-spacing:0.02px;line-height:17px">Filter:</div>
<div class="a" style="left:191px;top:506px;width:399px;height:25px;background:#fff;border:1px solid #707070;border-right-color:#dadada;border-bottom-color:#707070;box-shadow:inset 0 -1px 0 #fff"></div>
<div class="t" style="left:193px;top:512px;font-size:14px;line-height:17px">*</div>
<svg class="a" style="left:595px;top:510px" width="18" height="18" viewBox="0 0 18 18">
<path d="M1.5 0.5H9L12.5 4V15.5H1.5Z" fill="#fff" stroke="#555"/>
<path d="M3 4H8M3 6H10M3 12H7" stroke="#999"/>
<circle cx="9" cy="10" r="3.5" fill="#bfe8ff" stroke="#1a2e8a" stroke-width="1.5"/>
<path d="M11.5 12.5L15 16" stroke="#1a2e8a" stroke-width="2.2"/>
</svg>
<div class="t" style="left:637px;top:512px;letter-spacing:0.12px;line-height:17px">2 of 2 displayed</div>
<svg class="a" style="left:18px;top:543px" width="124" height="18" viewBox="0 0 124 18">
<defs><linearGradient id="fl" x1="0" y1="0" x2="1" y2="1"><stop offset="0" stop-color="#8a8af0"/><stop offset="1" stop-color="#2a2aa0"/></linearGradient>
<radialGradient id="hp" cx="0.4" cy="0.35" r="0.7"><stop offset="0" stop-color="#6aa0ff"/><stop offset="1" stop-color="#1438b0"/></radialGradient></defs>
<path d="M2 8L8 2V5.5H14V10.5H8V14Z" fill="#888"/>
<path d="M40 8L34 2V5.5H28V10.5H34V14Z" fill="#888"/>
<rect x="61" y="1" width="14" height="14" fill="url(#fl)" stroke="#22228a"/>
<rect x="63.5" y="1.5" width="9" height="6" fill="#f0f0ff"/>
<rect x="65" y="10" width="6" height="5" fill="#333"/>
<rect x="66" y="11" width="2" height="2" fill="#ddd"/>
<path d="M83.5 8.5Q83.5 6.5 86 6.5H94Q97 6.5 97 9V13.5H83.5Z" fill="#c8d4e4" stroke="#5a6a88"/>
<path d="M86 6.5L87.5 1.5H94.5L93.5 6.5Z" fill="#fff" stroke="#6a7a98"/>
<path d="M84 11H96.5" stroke="#8a9ab8"/>
<rect x="92" y="9" width="2.5" height="2" fill="#2c2"/>
<circle cx="112" cy="8" r="7.3" fill="#fff" stroke="#8a9ac8" stroke-width="0.6"/>
<circle cx="112" cy="8" r="6.2" fill="url(#hp)"/>
<text x="112" y="12.2" font-family="Liberation Sans" font-weight="bold" font-size="11" fill="#fff" text-anchor="middle">?</text>
</svg>
<div class="btn" style="left:307px;top:538px;width:82px;height:25px;line-height:26px">Highlight</div>
<div class="btn" style="left:393px;top:538px;width:98px;height:25px;line-height:26px;color:#a0a0a0;border-color:#aaaaaa">Highlight All</div>
<div class="btn" style="left:656px;top:538px;width:66px;height:25px;line-height:26px">Close</div>
</body></html>
